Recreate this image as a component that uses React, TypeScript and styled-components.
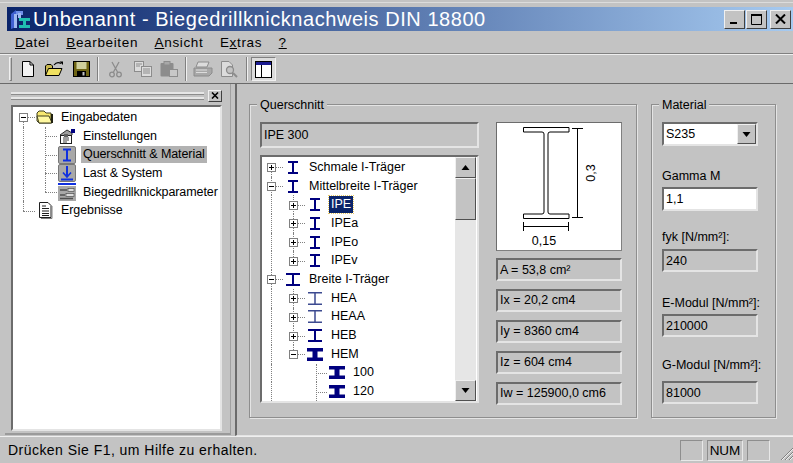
import { ReactNode } from 'react';
import styled, { createGlobalStyle } from 'styled-components';

const FACE = '#c3c3c3';

const GlobalStyle = createGlobalStyle`
  html, body {
    margin: 0;
    padding: 0;
    background: ${FACE};
  }
  * {
    box-sizing: border-box;
  }
`;

const Window = styled.div`
  width: 793px;
  height: 463px;
  overflow: hidden;
  display: flex;
  flex-direction: column;
  padding-top: 7px;
  background: ${FACE};
  color: #000;
  font-family: 'Liberation Sans', Arial, sans-serif;
  font-size: 12.5px;
  box-shadow: inset 0 2px 0 ${FACE}, inset 0 3px 0 #dcdcdc;
`;

const TitleBar = styled.div`
  height: 24px;
  margin-left: 7px;
  padding-left: 3px;
  padding-right: 2px;
  display: flex;
  align-items: center;
  background: linear-gradient(90deg, #0a246a 0%, #a6caf0 100%);
`;

const TitleText = styled.span`
  margin-left: 2px;
  flex: 1;
  color: #fff;
  font-size: 20px;
  letter-spacing: 0.55px;
  white-space: nowrap;
`;

const CaptionButton = styled.div<{ $gap?: number }>`
  width: 21px;
  height: 19px;
  margin-left: ${p => p.$gap ?? 1}px;
  background: ${FACE};
  border: 1px solid;
  border-color: #f0f0f0 #404040 #404040 #f0f0f0;
  display: flex;
  align-items: center;
  justify-content: center;
`;

const MenuBar = styled.div`
  height: 23px;
  padding-left: 15px;
  display: flex;
  align-items: center;
  gap: 16.5px;
  font-size: 13.5px;
  letter-spacing: 0.65px;
  border-bottom: 1px solid #808080;
`;

const ToolBar = styled.div`
  height: 30px;
  padding-left: 9px;
  display: flex;
  align-items: center;
  border-top: 1px solid #efefef;
  border-bottom: 1px solid #6a6a6a;
`;

const Gripper = styled.div`
  width: 3px;
  height: 24px;
  margin-right: 3px;
  border: 1px solid;
  border-color: #f0f0f0 #808080 #808080 #f0f0f0;
`;

const ToolSeparator = styled.div<{ $left: number; $right: number }>`
  width: 2px;
  height: 24px;
  margin: 0 ${p => p.$right}px 0 ${p => p.$left}px;
  border-left: 1px solid #808080;
  border-right: 1px solid #f0f0f0;
`;

const ToolSlot = styled.div<{ $width: number; $pressed?: boolean }>`
  width: ${p => p.$width}px;
  height: 24px;
  display: flex;
  align-items: center;
  justify-content: center;
  ${p =>
    p.$pressed &&
    `
    background: #dcdcdc;
    border: 1px solid;
    border-color: #808080 #f0f0f0 #f0f0f0 #808080;
  `}
`;

const Workspace = styled.div`
  flex: 1;
  min-height: 0;
  display: flex;
`;

const DockPane = styled.div`
  width: 226px;
  margin: 0 0 1px 5px;
  padding: 5px 8px 2px 6px;
  display: flex;
  flex-direction: column;
  border-right: 1px solid #a0a0a0;
  border-bottom: 2px solid #9a9a9a;
`;

const DockHeader = styled.div`
  height: 13px;
  margin-bottom: 3px;
  display: flex;
  align-items: center;
  gap: 4px;
`;

const DockGrip = styled.div`
  flex: 1;
  height: 7px;
  border-top: 2px solid #e6e6e6;
  border-bottom: 2px solid #e6e6e6;
  box-shadow: inset 0 1px 0 #8c8c8c, 0 1px 0 #8c8c8c;
`;

const DockClose = styled.div`
  width: 14px;
  height: 12px;
  display: flex;
  align-items: center;
  justify-content: center;
  background: ${FACE};
  border: 1px solid;
  border-color: #f0f0f0 #404040 #404040 #f0f0f0;
`;

const Sunken = styled.div<{ $fill?: string }>`
  border: 2px solid;
  border-color: #6c6c6c #e4e4e4 #e4e4e4 #6c6c6c;
  background: ${p => p.$fill ?? FACE};
`;

const NavTree = styled(Sunken)`
  flex: 1;
  padding: 1px 0 0 2px;
  overflow: hidden;
  letter-spacing: -0.09px;
`;

const ContentPane = styled.div`
  flex: 1;
  margin-left: 4px;
  padding: 20px 0 0 12px;
  display: flex;
  gap: 14px;
  border-left: 2px solid #6a6a6a;
  border-bottom: 1px solid #e4e4e4;
`;

const Group = styled.div<{ $width: number }>`
  position: relative;
  width: ${p => p.$width}px;
  height: 314px;
  padding: 17px 0 0 10px;
  border: 1px solid #8e8e8e;
  box-shadow: inset 1px 1px 0 #e4e4e4, 1px 1px 0 #e4e4e4;
`;

const GroupCaption = styled.span`
  position: absolute;
  top: -7px;
  left: 7px;
  padding: 0 3px;
  background: ${FACE};
  line-height: 15px;
`;

const SectionGrid = styled.div`
  display: grid;
  grid-template-columns: 219px 126px;
  column-gap: 17px;
`;

const Column = styled.div`
  display: flex;
  flex-direction: column;
`;

const ValueBox = styled(Sunken)<{ $height: number; $top?: number }>`
  height: ${p => p.$height}px;
  margin-top: ${p => p.$top ?? 0}px;
  padding-left: 2px;
  display: flex;
  align-items: center;
  white-space: nowrap;
`;

const MaterialBox = styled(ValueBox)`
  width: 96px;
`;

const SectionTree = styled(Sunken)`
  position: relative;
  height: 248px;
  margin-top: 7px;
  overflow: hidden;
  display: flex;
`;

const TreeRows = styled.div`
  flex: 1;
  min-width: 0;
  padding: 1px 0 0 1px;
  overflow: hidden;
`;

const ScrollBar = styled.div`
  width: 21px;
  margin-right: 1px;
  display: flex;
  flex-direction: column;
  background: #e6e6e6;
`;

const ScrollButton = styled.div<{ $height: number }>`
  height: ${p => p.$height}px;
  flex: none;
  display: flex;
  align-items: center;
  justify-content: center;
  background: ${FACE};
  border: 1px solid;
  border-color: #f0f0f0 #505050 #505050 #f0f0f0;
`;

const ScrollSpace = styled.div`
  flex: 1;
`;

const Row = styled.div<{ $height: number }>`
  height: ${p => p.$height}px;
  display: flex;
  align-items: stretch;
  white-space: nowrap;
`;

const Guide = styled.div<{ $width: number; $line?: boolean }>`
  position: relative;
  width: ${p => p.$width}px;
  flex: none;
  ${p =>
    p.$line &&
    `
    &::before {
      content: '';
      position: absolute;
      left: 8px;
      top: 0;
      bottom: 0;
      border-left: 1px dotted #808080;
    }
  `}
`;

/* tee or elbow drawn in dots; $up and $down choose the vertical extent */
const Elbow = styled.div<{ $width: number; $up?: boolean; $down?: boolean; $x?: number }>`
  position: relative;
  width: ${p => p.$width}px;
  flex: none;
  &::before {
    content: '';
    position: absolute;
    left: ${p => p.$x ?? 8}px;
    top: ${p => (p.$up ? 0 : 50)}%;
    bottom: ${p => (p.$down ? 0 : 50)}%;
    border-left: 1px dotted #808080;
  }
  &::after {
    content: '';
    position: absolute;
    left: ${p => p.$x ?? 8}px;
    right: 0;
    top: 50%;
    border-top: 1px dotted #808080;
  }
`;

const ExpanderBox = styled.span`
  position: absolute;
  z-index: 1;
  left: 4px;
  top: 50%;
  width: 9px;
  height: 9px;
  margin-top: -4px;
  background: #fff;
  border: 1px solid #808080;
`;

const ExpanderMark = styled.span<{ $open: boolean }>`
  position: absolute;
  left: 1px;
  top: 3px;
  width: 5px;
  height: 1px;
  background: #000;
  &::after {
    content: '';
    display: ${p => (p.$open ? 'none' : 'block')};
    position: absolute;
    left: 2px;
    top: -2px;
    width: 1px;
    height: 5px;
    background: #000;
  }
`;

const IconCell = styled.div<{ $width: number }>`
  width: ${p => p.$width}px;
  flex: none;
  display: flex;
  align-items: center;
  justify-content: center;
`;

const RowLabel = styled.span<{ $selected?: boolean; $focused?: boolean; $gap?: number }>`
  align-self: center;
  margin-left: ${p => p.$gap ?? 4}px;
  padding: 0 2px;
  line-height: 17px;
  ${p => p.$selected && 'background: #b2b2b2;'}
  ${p =>
    p.$focused &&
    `
    background: #0a246a;
    color: #fff;
    outline: 1px dotted #e8c860;
  `}
`;

const Preview = styled.div`
  height: 129px;
  background: #fff;
  border: 1px solid;
  border-color: #6c6c6c #808080 #808080 #6c6c6c;
`;

const FieldLabel = styled.div<{ $top: number; $bottom: number }>`
  margin-top: ${p => p.$top}px;
  margin-bottom: ${p => p.$bottom}px;
  line-height: 15px;
  white-space: nowrap;
`;

const ComboBox = styled(Sunken)`
  height: 24px;
  width: 96px;
  display: flex;
  align-items: stretch;
  background: #fff;
  padding-left: 2px;
`;

const ComboText = styled.span`
  flex: 1;
  align-self: center;
`;

const ComboButton = styled.div`
  width: 19px;
  display: flex;
  align-items: center;
  justify-content: center;
  background: ${FACE};
  border: 1px solid;
  border-color: #f0f0f0 #505050 #505050 #f0f0f0;
`;

const StatusBar = styled.div`
  height: 27px;
  padding: 3px 0 3px 8px;
  display: flex;
  align-items: center;
  gap: 4px;
  font-size: 14px;
  letter-spacing: 0.46px;
  border-top: 1px solid #efefef;
`;

const StatusText = styled.span`
  flex: 1;
`;

const StatusCell = styled.div<{ $width: number }>`
  width: ${p => p.$width}px;
  height: 21px;
  display: flex;
  align-items: center;
  justify-content: center;
  font-size: 13.5px;
  letter-spacing: 0;
  border: 1px solid;
  border-color: #8e8e8e #e8e8e8 #e8e8e8 #8e8e8e;
`;

const ResizeGrip = styled.svg`
  margin-left: 6px;
  align-self: flex-end;
`;

// I-section symbol for the profile tree; flange, web and colour vary per series
function BeamIcon({
  flange,
  web,
  thick,
  color = '#00007f',
}: {
  flange: number;
  web: number;
  thick: number;
  color?: string;
}) {
  const x = (18 - flange) / 2;
  return (
    <svg width="18" height="15" viewBox="0 0 18 15">
      <rect x={x} y="1" width={flange} height={thick} fill={color} />
      <rect x={x} y={14 - thick} width={flange} height={thick} fill={color} />
      <rect x={(18 - web) / 2} y="1" width={web} height="13" fill={color} />
    </svg>
  );
}

const SLIM = <BeamIcon flange={10} web={2} thick={2} />;
const WIDE = <BeamIcon flange={14} web={2} thick={2} />;
const LIGHT = <BeamIcon flange={14} web={1.5} thick={1.5} color="#3c4a90" />;
const HEAVY = <BeamIcon flange={16} web={5} thick={3.5} />;

function Expander({ open }: { open: boolean }) {
  return (
    <ExpanderBox>
      <ExpanderMark $open={open} />
    </ExpanderBox>
  );
}

interface ProfileRow {
  label: string;
  icon: ReactNode;
  level: 0 | 1 | 2;
  open?: boolean;
  focused?: boolean;
  lineAfter?: boolean;
}

const profileRows: ProfileRow[] = [
  { label: 'Schmale I-Träger', icon: SLIM, level: 0, open: false },
  { label: 'Mittelbreite I-Träger', icon: SLIM, level: 0, open: true },
  { label: 'IPE', icon: SLIM, level: 1, open: false, focused: true, lineAfter: true },
  { label: 'IPEa', icon: SLIM, level: 1, open: false, lineAfter: true },
  { label: 'IPEo', icon: SLIM, level: 1, open: false, lineAfter: true },
  { label: 'IPEv', icon: SLIM, level: 1, open: false },
  { label: 'Breite I-Träger', icon: WIDE, level: 0, open: true },
  { label: 'HEA', icon: LIGHT, level: 1, open: false, lineAfter: true },
  { label: 'HEAA', icon: LIGHT, level: 1, open: false, lineAfter: true },
  { label: 'HEB', icon: WIDE, level: 1, open: false, lineAfter: true },
  { label: 'HEM', icon: HEAVY, level: 1, open: true },
  { label: '100', icon: HEAVY, level: 2 },
  { label: '120', icon: HEAVY, level: 2 },
];

function ProfileTreeRow({ row, index }: { row: ProfileRow; index: number }) {
  const h = 18.7;
  if (row.level === 2) {
    return (
      <Row $height={h}>
        <Guide $width={22} $line />
        <Guide $width={22} />
        <Elbow $width={20} $up $down $x={9} />
        <IconCell $width={20}>{row.icon}</IconCell>
        <RowLabel>{row.label}</RowLabel>
      </Row>
    );
  }
  if (row.level === 1) {
    return (
      <Row $height={h}>
        <Guide $width={22} $line />
        <Elbow $width={20} $up $down={row.lineAfter}>
          <Expander open={!!row.open} />
        </Elbow>
        <IconCell $width={20}>{row.icon}</IconCell>
        <RowLabel $focused={row.focused}>{row.label}</RowLabel>
      </Row>
    );
  }
  return (
    <Row $height={h}>
      <Elbow $width={20} $up={index > 0} $down>
        <Expander open={!!row.open} />
      </Elbow>
      <IconCell $width={20}>{row.icon}</IconCell>
      <RowLabel>{row.label}</RowLabel>
    </Row>
  );
}

function FolderIcon() {
  return (
    <svg width="18" height="16" viewBox="0 0 18 16">
      <path d="M1 4 L3 2 H8 L10 4 H15 V14 H3 L1 12 Z" fill="#f8e870" stroke="#404020" strokeWidth="1" />
      <path d="M1 7 H13 L16 14 H3 Z" fill="#fff8a0" stroke="#404020" strokeWidth="1" />
      <rect x="15" y="5" width="2" height="9" fill="#202010" />
    </svg>
  );
}

function SettingsIcon() {
  return (
    <svg width="18" height="16" viewBox="0 0 18 16">
      <path d="M2 7 L9 2 L14 5 V7" fill="#a0a0a0" stroke="#303030" />
      <rect x="13" y="1" width="4" height="4" fill="#00007f" />
      <rect x="2.5" y="7.5" width="11" height="8" fill="#fff" stroke="#202020" />
      <path d="M5 10 H11 M5 12 H11 M5 14 H9" stroke="#404040" />
      <rect x="6" y="6" width="4" height="3" fill="#606060" />
    </svg>
  );
}

function NavBadge({ children }: { children: ReactNode }) {
  return (
    <svg width="18" height="18" viewBox="0 0 18 18">
      <rect x="0.5" y="0.5" width="17" height="17" rx="1.5" fill="#a8a8a8" stroke="#787878" />
      {children}
    </svg>
  );
}

function SectionIcon() {
  return (
    <NavBadge>
      <path d="M5 3.5 H13 M5 14.5 H13" stroke="#1030e0" strokeWidth="2" />
      <path d="M9 3 V15" stroke="#1030e0" strokeWidth="2" />
    </NavBadge>
  );
}

function LoadIcon() {
  return (
    <NavBadge>
      <path d="M9 2 V12" stroke="#1030e0" strokeWidth="2" />
      <path d="M5 8.5 L9 13 L13 8.5" fill="none" stroke="#1030e0" strokeWidth="1.6" />
      <path d="M3 15.5 H15" stroke="#1030e0" strokeWidth="2" />
    </NavBadge>
  );
}

function ParameterIcon() {
  return (
    <svg width="18" height="18" viewBox="0 0 18 18">
      <rect x="0" y="3" width="18" height="15" fill="#a8a8a8" />
      <rect x="0" y="0" width="18" height="2" fill="#1030e0" />
      <path d="M2 7 H9 M2 12 H7 M2 15.5 H15" stroke="#505050" strokeWidth="1.3" />
      <rect x="10" y="5.5" width="6" height="3" fill="#dcdcdc" stroke="#505050" strokeWidth="0.7" />
      <rect x="8" y="10.5" width="8" height="3" fill="#dcdcdc" stroke="#505050" strokeWidth="0.7" />
    </svg>
  );
}

function ResultIcon() {
  return (
    <svg width="16" height="17" viewBox="0 0 16 17">
      <path d="M2.5 0.5 H11 L14 3.5 V15.5 H2.5 Z" fill="#fff" stroke="#202020" />
      <path d="M15 4 V16.5 H4" fill="none" stroke="#808080" />
      <path d="M5 4 H9 M5 6.5 H12 M5 9 H12 M5 11.5 H12 M5 13.5 H12" stroke="#202020" />
    </svg>
  );
}

function NewIcon() {
  return (
    <svg width="14" height="16" viewBox="0 0 14 16">
      <path d="M1.5 0.5 H9 L12.5 4 V15.5 H1.5 Z" fill="#f2f2f2" stroke="#000" />
      <path d="M9 0.5 V4 H12.5" fill="none" stroke="#000" />
    </svg>
  );
}

function OpenIcon() {
  return (
    <svg width="19" height="16" viewBox="0 0 19 16">
      <path d="M0.5 5 L2 3.5 H6 L7.5 5 V14.5 H0.5 Z" fill="#c8b850" stroke="#000" />
      <path d="M0.5 14.5 L3.5 7.5 H17 L14 14.5 Z" fill="#f0e060" stroke="#000" />
      <path d="M9 4 Q12 0 16 2.5" fill="none" stroke="#000" strokeWidth="1.2" />
      <path d="M14.5 0.5 H18 V4 Z" fill="#000" />
    </svg>
  );
}

function SaveIcon() {
  return (
    <svg width="17" height="16" viewBox="0 0 17 16">
      <rect x="0.5" y="0.5" width="16" height="15" fill="#6e6414" stroke="#000" />
      <rect x="3.5" y="1" width="10" height="7" fill="#cfcf9c" />
      <rect x="4" y="10" width="9" height="5.5" fill="#000" />
      <rect x="9.5" y="11" width="2" height="3.5" fill="#c3c3c3" />
    </svg>
  );
}

function CutIcon() {
  return (
    <svg width="13" height="17" viewBox="0 0 13 17" fill="none" stroke="#8c8c8c" strokeWidth="1.3">
      <path d="M3 1 L8.5 11 M10 1 L4.5 11" />
      <circle cx="3" cy="13.5" r="2.3" />
      <circle cx="10" cy="13.5" r="2.3" />
    </svg>
  );
}

function CopyIcon() {
  return (
    <svg width="18" height="16" viewBox="0 0 18 16">
      <rect x="0.5" y="0.5" width="9" height="10" fill="#dcdcdc" stroke="#8c8c8c" />
      <rect x="7.5" y="5.5" width="10" height="10" fill="#dcdcdc" stroke="#8c8c8c" />
      <path d="M2 3 H8 M2 5 H6 M9 8 H16 M9 10 H16 M9 12 H16" stroke="#8c8c8c" />
    </svg>
  );
}

function PasteIcon() {
  return (
    <svg width="18" height="16" viewBox="0 0 18 16">
      <rect x="0.5" y="2" width="13" height="13.5" rx="1" fill="#8c8c8c" />
      <rect x="4" y="0.5" width="6" height="3.5" fill="#a8a8a8" stroke="#8c8c8c" />
      <rect x="9.5" y="8.5" width="8" height="7" fill="#c8c8c8" stroke="#8c8c8c" />
    </svg>
  );
}

function PrintIcon() {
  return (
    <svg width="20" height="16" viewBox="0 0 20 16">
      <path d="M5 1 H16 L14 6 H3 Z" fill="#dcdcdc" stroke="#8c8c8c" />
      <path d="M1 7 H19 V12 L16 15 H1 Z" fill="#a8a8a8" stroke="#8c8c8c" />
      <path d="M3 9 H14 M3 11.5 H14" stroke="#dcdcdc" />
    </svg>
  );
}

function PreviewIcon() {
  return (
    <svg width="19" height="17" viewBox="0 0 19 17" fill="none" stroke="#8c8c8c">
      <path d="M1.5 0.5 H9 L12.5 4 V15.5 H1.5 Z" fill="#dcdcdc" />
      <circle cx="10" cy="9" r="3.5" fill="#c3c3c3" strokeWidth="1.3" />
      <path d="M13 12 L17 16" strokeWidth="2" />
    </svg>
  );
}

function PanelIcon() {
  return (
    <svg width="17" height="17" viewBox="0 0 17 17">
      <rect x="0.5" y="0.5" width="16" height="16" fill="#fff" stroke="#000" />
      <rect x="1" y="1" width="15" height="3" fill="#1a1a90" />
      <path d="M6.5 4 V16" stroke="#000" />
    </svg>
  );
}

function SectionDrawing() {
  return (
    <svg width="124" height="127" viewBox="0 0 124 127">
      <path
        d="M26.5 4.5 H72 V9 H53 Q51 9 51 11 V89 Q51 91 53 91 H72 V95.5 H26.5 V91 H45 Q47 91 47 89 V11 Q47 9 45 9 H26.5 Z"
        fill="#fff"
        stroke="#000"
      />
      <g stroke="#000" fill="none">
        <path d="M80.5 5 V95 M75 5.5 H86 M75 94.5 H86" />
        <path d="M26.5 103.5 H71.5 M26.5 99 V108 M71.5 99 V108" />
      </g>
      <text
        x="0"
        y="0"
        transform="translate(98 50) rotate(-90)"
        textAnchor="middle"
        fontFamily="'Liberation Sans', Arial, sans-serif"
        fontSize="12.5"
      >
        0,3
      </text>
      <text
        x="47"
        y="122"
        textAnchor="middle"
        fontFamily="'Liberation Sans', Arial, sans-serif"
        fontSize="12.5"
      >
        0,15
      </text>
    </svg>
  );
}

function Triangle({ down }: { down?: boolean }) {
  return (
    <svg width="9" height="5" viewBox="0 0 9 5">
      <path d={down ? 'M0.5 0 H8.5 L4.5 5 Z' : 'M4.5 0 L8.5 5 H0.5 Z'} fill="#000" />
    </svg>
  );
}

const navItems = [
  { label: 'Einstellungen', icon: <SettingsIcon /> },
  { label: 'Querschnitt & Material', icon: <SectionIcon />, selected: true },
  { label: 'Last & System', icon: <LoadIcon /> },
  { label: 'Biegedrillknickparameter', icon: <ParameterIcon /> },
];

function NavigationTree() {
  const h = 18.7;
  return (
    <NavTree $fill="#fff">
      <Row $height={h}>
        <Elbow $width={20} $down>
          <Expander open />
        </Elbow>
        <IconCell $width={20}>
          <FolderIcon />
        </IconCell>
        <RowLabel>Eingabedaten</RowLabel>
      </Row>
      {navItems.map((item, i) => (
        <Row $height={h} key={item.label}>
          <Guide $width={22} $line />
          <Elbow $width={20} $up $down={i < navItems.length - 1} />
          <IconCell $width={20}>{item.icon}</IconCell>
          <RowLabel $selected={item.selected}>{item.label}</RowLabel>
        </Row>
      ))}
      <Row $height={h}>
        <Elbow $width={20} $up />
        <IconCell $width={20}>
          <ResultIcon />
        </IconCell>
        <RowLabel>Ergebnisse</RowLabel>
      </Row>
    </NavTree>
  );
}

const sectionValues = ['Ix = 20,2 cm4', 'Iy = 8360 cm4', 'Iz = 604 cm4', 'Iw = 125900,0 cm6'];

export default function App() {
  return (
    <Window>
      <GlobalStyle />
      <TitleBar>
        <svg width="21" height="21" viewBox="0 0 21 21">
          <path d="M1 5 L6 1 V18 L1 20 Z" fill="#4060d0" />
          <path d="M6 2 H13 V6 H6 Z" fill="#7090e8" />
          <path d="M4 5 H7 V19 H4 Z M8 4 H11 V9 H8 Z" fill="#a0b8f0" />
          <path d="M9 9 H20 V12 H16 V16 H20 V19 H9 V16 H13 V12 H9 Z" fill="#20c0b0" />
        </svg>
        <TitleText>Unbenannt - Biegedrillknicknachweis DIN 18800</TitleText>
        <CaptionButton>
          <svg width="9" height="9" viewBox="0 0 9 9">
            <rect x="0" y="7" width="7" height="2" fill="#000" />
          </svg>
        </CaptionButton>
        <CaptionButton>
          <svg width="11" height="11" viewBox="0 0 11 11">
            <path d="M0.5 1 H10.5 V10.5 H0.5 Z" fill="none" stroke="#000" />
            <rect x="0" y="0" width="11" height="2" fill="#000" />
          </svg>
        </CaptionButton>
        <CaptionButton $gap={3}>
          <svg width="11" height="10" viewBox="0 0 11 10">
            <path d="M1 0.5 L10 9.5 M10 0.5 L1 9.5" stroke="#000" strokeWidth="2" />
          </svg>
        </CaptionButton>
      </TitleBar>

      <MenuBar>
        <span>
          <u>D</u>atei
        </span>
        <span>
          <u>B</u>earbeiten
        </span>
        <span>
          <u>A</u>nsicht
        </span>
        <span>
          E<u>x</u>tras
        </span>
        <span>
          <u>?</u>
        </span>
      </MenuBar>

      <ToolBar>
        <Gripper />
        <ToolSlot $width={26.5}>
          <NewIcon />
        </ToolSlot>
        <ToolSlot $width={26.5}>
          <OpenIcon />
        </ToolSlot>
        <ToolSlot $width={26.5}>
          <SaveIcon />
        </ToolSlot>
        <ToolSeparator $left={2.25} $right={3.6} />
        <ToolSlot $width={26.8}>
          <CutIcon />
        </ToolSlot>
        <ToolSlot $width={26.8}>
          <CopyIcon />
        </ToolSlot>
        <ToolSlot $width={26.8}>
          <PasteIcon />
        </ToolSlot>
        <ToolSeparator $left={2.5} $right={2} />
        <ToolSlot $width={27}>
          <PrintIcon />
        </ToolSlot>
        <ToolSlot $width={27}>
          <PreviewIcon />
        </ToolSlot>
        <ToolSeparator $left={3} $right={3} />
        <ToolSlot $width={25} $pressed>
          <PanelIcon />
        </ToolSlot>
      </ToolBar>

      <Workspace>
        <DockPane>
          <DockHeader>
            <DockGrip />
            <DockClose>
              <svg width="8" height="7" viewBox="0 0 8 7">
                <path d="M1 0.5 L7 6.5 M7 0.5 L1 6.5" stroke="#000" strokeWidth="1.6" />
              </svg>
            </DockClose>
          </DockHeader>
          <NavigationTree />
        </DockPane>

        <ContentPane>
          <Group $width={388}>
            <GroupCaption>Querschnitt</GroupCaption>
            <SectionGrid>
              <Column>
                <ValueBox $height={26}>IPE 300</ValueBox>
                <SectionTree $fill="#fff">
                  <TreeRows>
                    {profileRows.map((row, i) => (
                      <ProfileTreeRow row={row} index={i} key={row.label} />
                    ))}
                  </TreeRows>
                  <ScrollBar>
                    <ScrollButton $height={21}>
                      <Triangle />
                    </ScrollButton>
                    <ScrollButton $height={42} />
                    <ScrollSpace />
                    <ScrollButton $height={21}>
                      <Triangle down />
                    </ScrollButton>
                  </ScrollBar>
                </SectionTree>
              </Column>
              <Column>
                <Preview>
                  <SectionDrawing />
                </Preview>
                <ValueBox $height={23} $top={7}>
                  A = 53,8 cm²
                </ValueBox>
                {sectionValues.map(v => (
                  <ValueBox $height={23} $top={7.9} key={v}>
                    {v}
                  </ValueBox>
                ))}
              </Column>
            </SectionGrid>
          </Group>

          <Group $width={125}>
            <GroupCaption>Material</GroupCaption>
            <Column>
              <ComboBox>
                <ComboText>S235</ComboText>
                <ComboButton>
                  <Triangle down />
                </ComboButton>
              </ComboBox>
              <FieldLabel $top={23} $bottom={3}>
                Gamma M
              </FieldLabel>
              <MaterialBox $height={24} $fill="#fff">
                1,1
              </MaterialBox>
              <FieldLabel $top={19} $bottom={4}>
                fyk [N/mm²]:
              </FieldLabel>
              <MaterialBox $height={23}>240</MaterialBox>
              <FieldLabel $top={24} $bottom={3}>
                E-Modul [N/mm²]:
              </FieldLabel>
              <MaterialBox $height={23}>210000</MaterialBox>
              <FieldLabel $top={21} $bottom={8}>
                G-Modul [N/mm²]:
              </FieldLabel>
              <MaterialBox $height={23}>81000</MaterialBox>
            </Column>
          </Group>
        </ContentPane>
      </Workspace>

      <StatusBar>
        <StatusText>Drücken Sie F1, um Hilfe zu erhalten.</StatusText>
        <StatusCell $width={23} />
        <StatusCell $width={36}>NUM</StatusCell>
        <StatusCell $width={23} />
        <ResizeGrip width="13" height="13" viewBox="0 0 13 13">
          <path d="M13 1 L1 13 M13 5 L5 13 M13 9 L9 13" stroke="#808080" strokeWidth="1" />
          <path d="M13 2 L2 13 M13 6 L6 13 M13 10 L10 13" stroke="#f0f0f0" strokeWidth="1" />
        </ResizeGrip>
      </StatusBar>
    </Window>
  );
}
